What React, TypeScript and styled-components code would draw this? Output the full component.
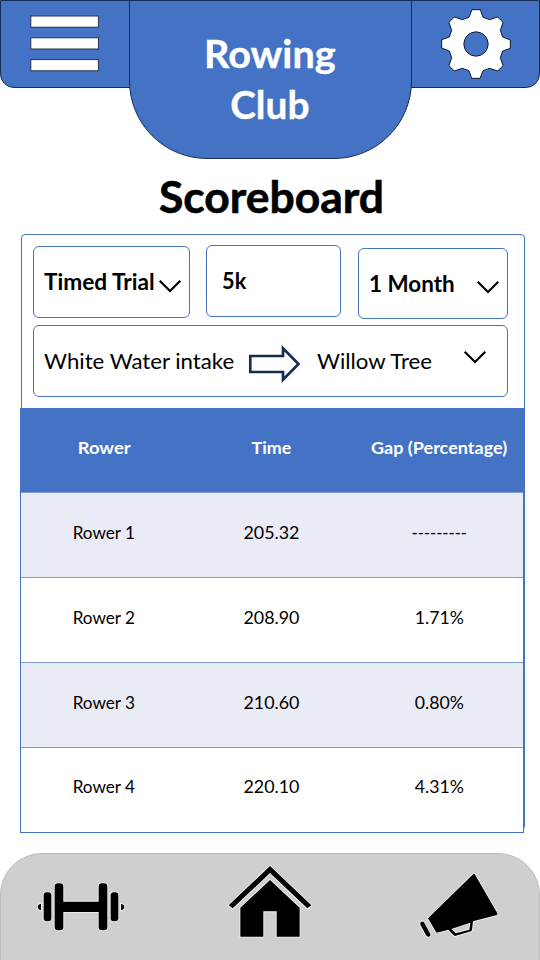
import React from "react";
import styled, { createGlobalStyle } from "styled-components";

const BLUE = "#4472c4";
const NAVY = "#172c51";

const GlobalStyle = createGlobalStyle`
  *, *::before, *::after { box-sizing: border-box; }
  body { margin: 0; background: #fff; }
`;

const Screen = styled.div`
  width: 540px;
  height: 960px;
  overflow: hidden;
  display: flex;
  flex-direction: column;
  background: #fff;
  color: #000;
  font-family: "Lato", "Liberation Sans", sans-serif;
`;

const Label = styled.span<{ $stretch?: number; $origin?: string }>`
  display: inline-block;
  white-space: nowrap;
  transform: scaleX(${(p) => p.$stretch ?? 1});
  transform-origin: ${(p) => p.$origin ?? "left"} center;
`;

const Header = styled.header`
  display: grid;
  grid-template-columns: 129px 283px 128px;
  align-items: start;
  flex: none;
  height: 159px;
`;

const SidePanel = styled.button<{ $side: "left" | "right" }>`
  height: 88px;
  padding: 0;
  margin: ${(p) => (p.$side === "left" ? "0 -8px 0 0" : "0 0 0 -8px")};
  display: flex;
  justify-content: flex-start;
  align-items: flex-start;
  background: ${BLUE};
  border: 1px solid ${NAVY};
  border-radius: ${(p) => (p.$side === "left" ? "0 0 0 14px" : "0 0 14px 0")};
`;

const Brand = styled.div`
  z-index: 1;
  height: 159px;
  padding: 26.5px 1.5px 0 0;
  display: flex;
  flex-direction: column;
  align-items: center;
  background: ${BLUE};
  border: 1px solid ${NAVY};
  border-radius: 0 0 78px 78px;
  color: #fff;
  font-size: 39px;
  font-weight: 700;
  line-height: 51px;
  -webkit-text-stroke: 0.4px #fff;
`;

const MenuSvg = styled.svg`
  margin: 13px 0 0 27px;
`;

const GearSvg = styled.svg`
  margin: 7px 0 0 35px;
`;

const Title = styled.h1`
  margin: 0;
  flex: none;
  height: 75px;
  padding: 6.5px 0 0 3px;
  text-align: center;
  font-size: 44px;
  font-weight: 700;
  line-height: 61px;
  -webkit-text-stroke: 0.6px #000;
`;

const Card = styled.main`
  width: 504px;
  height: 596px;
  margin-left: 21px;
  flex: none;
  border: 1px solid ${BLUE};
  border-radius: 4px;
`;

const Filters = styled.div`
  display: flex;
  align-items: flex-start;
  height: 90px;
  padding: 10px 0 0 11px;
`;

const Field = styled.div<{ $w: number; $h?: number; $drop?: number; $gap?: number; $inset: number }>`
  display: flex;
  align-items: center;
  flex: none;
  width: ${(p) => p.$w}px;
  height: ${(p) => p.$h ?? 72}px;
  margin: ${(p) => p.$drop ?? 0}px ${(p) => p.$gap ?? 0}px 0 0;
  padding: 0 0 1px ${(p) => p.$inset}px;
  border: 1px solid ${BLUE};
  border-radius: 6px;
  font-size: 22px;
  font-weight: 700;
`;

const RouteField = styled(Field)`
  margin-left: 11px;
  padding-bottom: 2px;
  font-weight: 400;
`;

const ChevronSvg = styled.svg<{ $right: number; $shift: number }>`
  flex: none;
  margin: ${(p) => p.$shift}px ${(p) => p.$right}px 0 auto;
`;

const ArrowSvg = styled.svg`
  flex: none;
  margin: 7px 13.8px 0 14.2px;
`;

const Table = styled.div`
  width: 504px;
  margin: 11px 0 0 -2px;
  border: solid ${BLUE};
  border-width: 0 1px;
`;

const Row = styled.div<{ $tone: "head" | "tint" | "plain"; $last?: boolean }>`
  display: grid;
  grid-template-columns: 166px 168px 168px;
  align-items: center;
  justify-items: center;
  height: 85px;
  padding-bottom: ${(p) => (p.$last ? 8 : 6)}px;
  background: ${(p) => ({ head: BLUE, tint: "#e9ebf5", plain: "#fff" })[p.$tone]};
  color: ${(p) => (p.$tone === "head" ? "#fff" : "#000")};
  font-size: 17.5px;
  font-weight: ${(p) => (p.$tone === "head" ? 700 : 400)};
  border-bottom: 1px solid ${(p) => (p.$last ? BLUE : "#7d9bd4")};
`;

const Nav = styled.nav`
  display: flex;
  align-items: flex-start;
  flex: none;
  height: 120px;
  margin-top: 23px;
  background: #d0cece;
  border: 1px solid #bcbbbc;
  border-radius: 42px 42px 0 0;
`;

const NavIcon = styled.svg<{ $left: number; $top: number }>`
  flex: none;
  margin: ${(p) => p.$top}px 0 0 ${(p) => p.$left}px;
  fill: #000;
  stroke: #f4f4f4;
  stroke-width: 5;
  paint-order: stroke;
`;

const toothQuarter = [
  [13, -103], [21, -80], [41, -73], [65, -81],
  [81, -65], [73, -41], [80, -21], [103, -12],
];
const gearPoints = [0, 1, 2, 3]
  .flatMap((q) =>
    toothQuarter.map(([x, y]) => {
      let p = [x, y];
      for (let i = 0; i < q; i++) p = [-p[1], p[0]];
      return p.join(",");
    })
  )
  .join(" ");

const MenuIcon = () => (
  <MenuSvg width="76" height="62" viewBox="28 14 76 62">
    {[16, 37.8, 59.6].map((y) => (
      <rect key={y} x="30.8" y={y} width="67.6" height="11.2" fill="#fff" stroke="#26344f" />
    ))}
  </MenuSvg>
);

const GearIcon = () => (
  <GearSvg width="72" height="72" viewBox="-108 -108 216 216">
    <polygon points={gearPoints} fill="#fff" stroke="#101a2c" strokeWidth="3" />
    <circle r="36.5" fill={BLUE} stroke="#101a2c" strokeWidth="3" />
  </GearSvg>
);

const Chevron = ({ right, shift }: { right: number; shift: number }) => (
  <ChevronSvg $right={right} $shift={shift} width="24" height="14" viewBox="0 0 24 14">
    <path d="M1.7 1.8 L12 12 L22.3 1.8" fill="none" stroke="#000" strokeWidth="2.2" />
  </ChevronSvg>
);

const columns = [
  { title: "Rower", head: 1.05, body: 0.98 },
  { title: "Time", head: 1.02, body: 1.02 },
  { title: "Gap (Percentage)", head: 1.03, body: 1.01 },
];

const results = [
  ["Rower 1", "205.32", "---------"],
  ["Rower 2", "208.90", "1.71%"],
  ["Rower 3", "210.60", "0.80%"],
  ["Rower 4", "220.10", "4.31%"],
];

export default function App() {
  return (
    <Screen>
      <GlobalStyle />
      <Header>
        <SidePanel $side="left" aria-label="Menu">
          <MenuIcon />
        </SidePanel>
        <Brand>
          <Label $stretch={1.015} $origin="center">Rowing</Label>
          <Label $stretch={0.995} $origin="center">Club</Label>
        </Brand>
        <SidePanel $side="right" aria-label="Settings">
          <GearIcon />
        </SidePanel>
      </Header>

      <Title>
        <Label $stretch={1.01} $origin="center">Scoreboard</Label>
      </Title>

      <Card>
        <Filters>
          <Field $w={157} $drop={1} $gap={16} $inset={10.3}>
            <Label $stretch={1.03}>Timed Trial</Label>
            <Chevron right={7.5} shift={9} />
          </Field>
          <Field $w={135} $gap={17} $inset={14.5}>
            <Label $stretch={0.99}>5k</Label>
          </Field>
          <Field $w={150} $h={71} $drop={3} $inset={9.7}>
            <Label $stretch={1.02}>1 Month</Label>
            <Chevron right={7} shift={8} />
          </Field>
        </Filters>
        <RouteField $w={475} $inset={10.2}>
          <Label $stretch={1.01}>White Water intake</Label>
          <ArrowSvg width="56" height="40" viewBox="247 343 56 40">
            <path
              d="M250.3 355 H283 V347.3 L298.5 363 L283 378.7 V371 H250.3 Z"
              fill="#fff"
              stroke={NAVY}
              strokeWidth="2.7"
            />
          </ArrowSvg>
          <Label $stretch={1.01}>Willow Tree</Label>
          <Chevron right={19.6} shift={-5.6} />
        </RouteField>

        <Table>
          <Row $tone="head">
            {columns.map((c) => (
              <Label key={c.title} $stretch={c.head} $origin="center">{c.title}</Label>
            ))}
          </Row>
          {results.map((cells, r) => (
            <Row key={cells[0]} $tone={r % 2 ? "plain" : "tint"} $last={r === results.length - 1}>
              {cells.map((text, c) => (
                <Label
                  key={c}
                  $stretch={text.startsWith("-") ? 0.95 : columns[c].body}
                  $origin="center"
                >
                  {text}
                </Label>
              ))}
            </Row>
          ))}
        </Table>
      </Card>

      <Nav>
        <NavIcon $left={35} $top={26} width="90" height="54" viewBox="108 120 270 162">
          <path d="M123 191 Q113 194 113 201 Q113 208 123 211 Z" />
          <path d="M363 191 Q373 194 373 201 Q373 208 363 211 Z" />
          <rect x="131" y="157" width="23" height="87" rx="9" />
          <rect x="332" y="157" width="23" height="87" rx="9" />
          <path d="M190 185 H296 V140 Q296 130 306 130 H312 Q322 130 322 140 V261 Q322 271 312 271 H306 Q296 271 296 261 V216 H190 V261 Q190 271 180 271 H174 Q164 271 164 261 V140 Q164 130 174 130 H180 Q190 130 190 140 Z" />
        </NavIcon>
        <NavIcon $left={99} $top={9} width="90" height="78" viewBox="135 69 270 234">
          <path d="M270 78 L394 196 L382 205 L270 99 L158 205 L146 196 Z" />
          <path d="M270 120 L359 203 V290 H290 V214 H250 V290 H181 V203 Z" />
        </NavIcon>
        <NavIcon $left={103} $top={18} width="84" height="68" viewBox="174 96 252 204">
          <path
            fillRule="evenodd"
            d="M344 102 L413 221 L411 225 L339 244 L336 270 L333 274 L285 288 L281 286 L265 269 L231 278 L228 276 L204 235 L340 102 Z M274 267 L287 280 L328 269 L331 248 Z"
          />
          <path d="M192 247 L211 282 Q213 289 206 290 Q201 291 198 285 L181 254 Q179 247 184 245 Q189 243 192 247 Z" />
        </NavIcon>
      </Nav>
    </Screen>
  );
}
